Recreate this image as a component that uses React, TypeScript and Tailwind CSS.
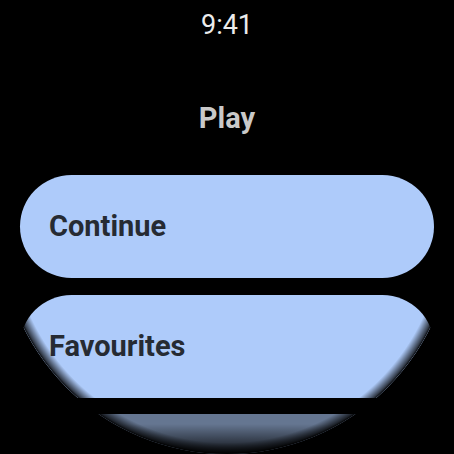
const chips = ["Continue", "Favourites", ""];

export default function App() {
  return (
    <div className="flex h-[454px] w-[454px] items-center justify-center bg-black">
      <div
        className="relative h-[454px] w-[454px] overflow-hidden rounded-full bg-black"
        style={{ fontFamily: "Roboto, 'Noto Sans', sans-serif" }}
      >
        <div className="flex flex-col items-center">
          <div className="mt-[8px] h-[34px] text-[27px] leading-[34px] text-[#ececec]">9:41</div>
          <div className="mt-[58px] h-[36px] text-[29px] font-bold leading-[36px] text-[#c9c9c9]">
            Play
          </div>
          <div className="mt-[39px] flex w-full flex-col px-[20px]">
            {chips.map((label, i) => (
              <div
                key={i}
                className={`flex h-[103px] w-full items-center rounded-full bg-[#aecbfa] pl-[29px] ${
                  i === 0 ? "" : i === 1 ? "mt-[17px]" : "mt-[16px] opacity-[0.58]"
                }`}
              >
                <span className="text-[29px] font-bold leading-none text-[#262b33]">{label}</span>
              </div>
            ))}
          </div>
        </div>
        <div className="pointer-events-none absolute inset-0 rounded-full bg-[radial-gradient(circle_closest-side_at_center,transparent_0%,transparent_95%,rgba(0,0,0,0.7)_99%,#000_100%)]" />
        <div className="pointer-events-none absolute inset-x-0 bottom-0 h-[30px] bg-[linear-gradient(to_bottom,transparent,rgba(0,0,0,0.85))]" />
      </div>
    </div>
  );
}
